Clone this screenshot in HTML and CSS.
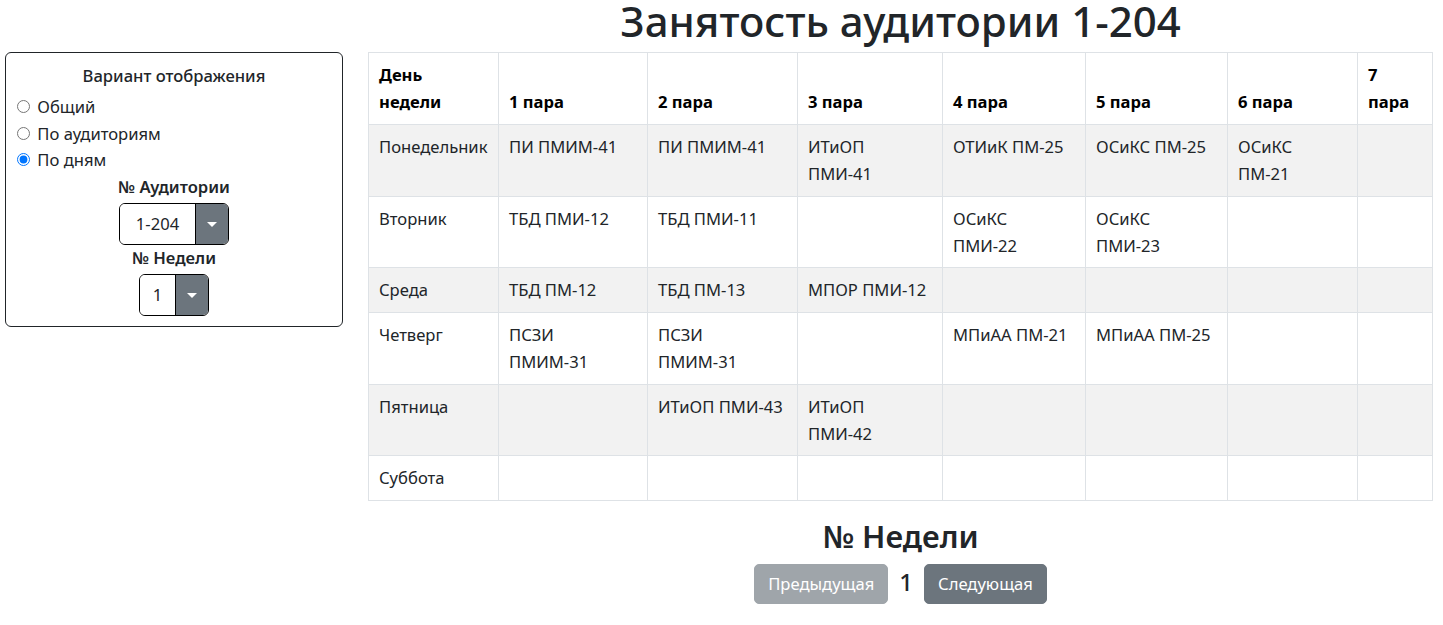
FILE: index.html
```html
<!DOCTYPE html>
<html lang="ru">
<head>
<meta charset="utf-8">
<title>Занятость аудитории 1-204</title>
<link rel="stylesheet" href="styles.css">
</head>
<body>
<div class="page">
  <aside class="side">
    <div class="panel">
      <div class="panel-title">Вариант отображения</div>
      <label class="opt"><input type="radio" name="view"> Общий</label>
      <label class="opt"><input type="radio" name="view"> По аудиториям</label>
      <label class="opt"><input type="radio" name="view" checked> По дням</label>
      <div class="field-label">№ Аудитории</div>
      <div class="picker">
        <span class="picker-value">1-204</span>
        <span class="picker-btn"></span>
      </div>
      <div class="field-label">№ Недели</div>
      <div class="picker">
        <span class="picker-value picker-value--narrow">1</span>
        <span class="picker-btn"></span>
      </div>
    </div>
  </aside>
  <main class="content">
    <h1 class="title">Занятость аудитории 1-204</h1>
    <table class="schedule">
      <thead>
        <tr>
          <th class="c-day">День<br>недели</th>
          <th class="c1">1 пара</th>
          <th class="c2">2 пара</th>
          <th class="c3">3 пара</th>
          <th class="c4">4 пара</th>
          <th class="c5">5 пара</th>
          <th class="c6">6 пара</th>
          <th class="c7">7<br>пара</th>
        </tr>
      </thead>
      <tbody>
        <tr class="striped">
          <td>Понедельник</td>
          <td>ПИ ПМИМ-41</td>
          <td>ПИ ПМИМ-41</td>
          <td>ИТиОП<br>ПМИ-41</td>
          <td>ОТИиК ПМ-25</td>
          <td>ОСиКС ПМ-25</td>
          <td>ОСиКС<br>ПМ-21</td>
          <td></td>
        </tr>
        <tr>
          <td>Вторник</td>
          <td>ТБД ПМИ-12</td>
          <td>ТБД ПМИ-11</td>
          <td></td>
          <td>ОСиКС<br>ПМИ-22</td>
          <td>ОСиКС<br>ПМИ-23</td>
          <td></td>
          <td></td>
        </tr>
        <tr class="striped">
          <td>Среда</td>
          <td>ТБД ПМ-12</td>
          <td>ТБД ПМ-13</td>
          <td>МПОР ПМИ-12</td>
          <td></td>
          <td></td>
          <td></td>
          <td></td>
        </tr>
        <tr>
          <td>Четверг</td>
          <td>ПСЗИ<br>ПМИМ-31</td>
          <td>ПСЗИ<br>ПМИМ-31</td>
          <td></td>
          <td>МПиАА ПМ-21</td>
          <td>МПиАА ПМ-25</td>
          <td></td>
          <td></td>
        </tr>
        <tr class="striped">
          <td>Пятница</td>
          <td></td>
          <td>ИТиОП ПМИ-43</td>
          <td>ИТиОП<br>ПМИ-42</td>
          <td></td>
          <td></td>
          <td></td>
          <td></td>
        </tr>
        <tr>
          <td>Суббота</td>
          <td></td>
          <td></td>
          <td></td>
          <td></td>
          <td></td>
          <td></td>
          <td></td>
        </tr>
      </tbody>
    </table>
    <div class="pager">
      <h3 class="pager-title">№ Недели</h3>
      <div class="pager-row">
        <button class="btn btn-disabled" disabled>Предыдущая</button>
        <span class="pager-num">1</span>
        <button class="btn">Следующая</button>
      </div>
    </div>
  </main>
</div>
</body>
</html>
```

FILE: styles.css
```css
* {
  box-sizing: border-box;
}

body {
  margin: 0;
  font-family: "Noto Sans", "Open Sans", sans-serif;
  font-size: 16.6px;
  line-height: 26.4px;
  color: #212529;
  background: #fff;
}

.page {
  display: flex;
  align-items: flex-start;
  gap: 25px;
  width: 1443px;
}

.side {
  flex: 0 0 338px;
  margin-left: 5px;
  margin-top: 52px;
}

.panel {
  border: 1px solid #212529;
  border-radius: 6px;
  padding: 10px 6px 10px 6px;
  display: flex;
  flex-direction: column;
  align-items: stretch;
}

.panel-title {
  text-align: center;
  font-weight: 500;
  margin-bottom: 5px;
}

.opt {
  display: block;
}

.opt input {
  margin: 3px 3px 0 5px;
}

.field-label {
  text-align: center;
  font-weight: 600;
  margin-bottom: 3px;
}

.picker {
  align-self: center;
  display: inline-flex;
  height: 42px;
  border: 1px solid #000;
  border-radius: 6px;
  overflow: hidden;
}

.picker-value {
  display: flex;
  align-items: center;
  padding: 0 16px;
  background: #fff;
  color: #212529;
}

.picker-value--narrow {
  padding: 0 13px;
}

.picker-btn {
  width: 33px;
  background: #6c757d;
  border-left: 1px solid #000;
  display: flex;
  align-items: center;
  justify-content: center;
}

.picker-btn::before {
  content: "";
  border-left: 5px solid transparent;
  border-right: 5px solid transparent;
  border-top: 5px solid #fff;
}

.content {
  flex: 0 0 1064px;
  display: flex;
  flex-direction: column;
}

.title {
  margin: 0 0 10px;
  text-align: center;
  font-size: 42px;
  line-height: 42px;
  font-weight: 500;
  color: #212529;
}

.schedule {
  width: 1064px;
  table-layout: fixed;
  border-collapse: collapse;
  border: 1px solid #dee2e6;
  margin-bottom: 17px;
}

.schedule th,
.schedule td {
  border: 1px solid #dee2e6;
  padding: 8px 9px 8px 10px;
  line-height: 27.4px;
  white-space: nowrap;
  text-align: left;
}

.schedule th {
  vertical-align: bottom;
  font-weight: 700;
  color: #000;
}

.schedule td {
  vertical-align: top;
  color: #212529;
}

.schedule tr.striped td {
  background: #f2f2f2;
}

.c-day { width: 130px; }
.c1 { width: 149px; }
.c2 { width: 150px; }
.c3 { width: 145px; }
.c4 { width: 143px; }
.c5 { width: 142px; }
.c6 { width: 130px; }
.c7 { width: 75px; }

.pager {
  display: flex;
  flex-direction: column;
  align-items: center;
}

.pager-title {
  margin: 0 0 9px;
  font-size: 30.8px;
  line-height: 37px;
  font-weight: 600;
  color: #212529;
}

.pager-row {
  display: flex;
  align-items: center;
  gap: 11px;
}

.pager-num {
  font-size: 24px;
  line-height: 30px;
  font-weight: 500;
  margin-top: -4px;
}

.btn {
  font-family: inherit;
  font-size: 16.6px;
  line-height: 26px;
  padding: 6px 13px;
  border: 1px solid #6c757d;
  border-radius: 5px;
  background: #6c757d;
  color: #fff;
}

.btn-disabled {
  background: #9fa5aa;
  border-color: #9fa5aa;
}
```
